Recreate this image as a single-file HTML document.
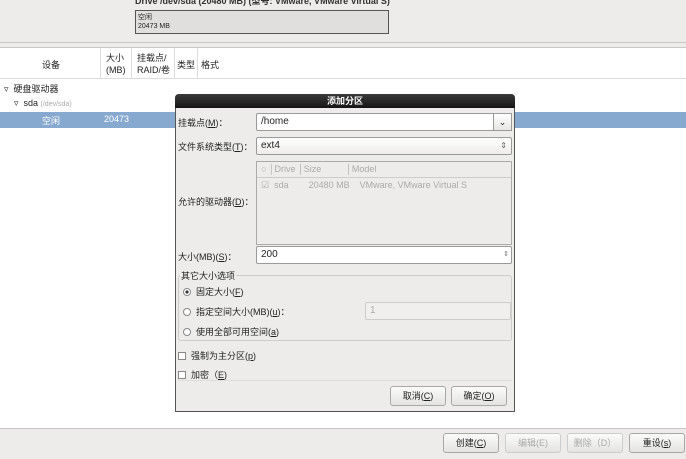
<!DOCTYPE html>
<html><head><meta charset="utf-8"><style>
*{box-sizing:border-box;margin:0;padding:0}
body{width:686px;height:459px;background:#edeceb;font-family:"Liberation Sans","Noto Sans CJK SC",sans-serif;font-size:9px;color:#222;position:relative;overflow:hidden}
.a{position:absolute}
.btn{position:absolute;height:20px;border:1px solid #a8a8a5;border-radius:3px;background:linear-gradient(#fbfbfa,#e4e3e1);text-align:center;line-height:18px;font-size:9px}
.dis{color:#aaa;border-color:#ccc}
.inp{position:absolute;background:#fff;border:1px solid #9a9a98;border-radius:2px;height:18px;line-height:16px;padding-left:4px;font-size:10px}
.lab{position:absolute;left:3px;font-size:9px}
.radio{display:inline-block;width:8px;height:8px;border:1px solid #888;border-radius:50%;background:#fff;vertical-align:-1px;margin-right:5px}
.cb{display:inline-block;width:8px;height:8px;border:1px solid #888;background:#fff;vertical-align:-1px;margin-right:5px}
</style></head><body>
<div class="a" style="left:0;top:0;width:686px;height:43px;border-bottom:1px solid #c8c7c5"></div>
<div class="a" style="left:135px;top:-6px;font-size:9px;font-weight:bold;color:#333">Drive /dev/sda (20480 MB) (型号: VMware, VMware Virtual S)</div>
<div class="a" style="left:135px;top:10px;width:254px;height:24px;background:#e0dfdd;border:1px solid #555;font-size:7px;line-height:9px;padding:2px 2px">空闲<br>20473 MB</div>
<div class="a" style="left:0;top:47px;width:686px;height:382px;background:#fff;border-top:1px solid #c8c7c5;border-bottom:1px solid #c8c7c5"></div>
<div class="a" style="left:0;top:48px;width:686px;height:31px;border-bottom:1px solid #ddd"></div>
<div class="a" style="left:42px;top:58px">设备</div>
<div class="a" style="left:100px;top:48px;width:1px;height:31px;background:#ddd"></div>
<div class="a" style="left:106px;top:52px;line-height:12px">大小<br>(MB)</div>
<div class="a" style="left:131px;top:48px;width:1px;height:31px;background:#ddd"></div>
<div class="a" style="left:137px;top:52px;line-height:12px">挂载点/<br>RAID/卷</div>
<div class="a" style="left:174px;top:48px;width:1px;height:31px;background:#ddd"></div>
<div class="a" style="left:177px;top:58px">类型</div>
<div class="a" style="left:197px;top:48px;width:1px;height:31px;background:#ddd"></div>
<div class="a" style="left:201px;top:58px">格式</div>
<div class="a" style="left:4px;top:82px">▿ &nbsp;硬盘驱动器</div>
<div class="a" style="left:14px;top:98px">▿ &nbsp;sda <span style="color:#aaa;font-size:7px">(/dev/sda)</span></div>
<div class="a" style="left:0;top:112px;width:686px;height:16px;background:#88a9cf"></div>
<div class="a" style="left:42px;top:114px;color:#fff">空闲</div>
<div class="a" style="left:104px;top:114px;color:#fff">20473</div>

<div class="a" style="left:175px;top:94px;width:340px;height:318px;background:#edeceb;border:1px solid #555;border-radius:4px 4px 0 0"></div>
<div class="a" style="left:175px;top:94px;width:340px;height:14px;background:linear-gradient(#3a3a3a,#151515);border-radius:4px 4px 0 0;color:#fff;text-align:center;line-height:14px;font-weight:bold;font-size:9px">添加分区</div>
<div class="a" style="left:175px;top:108px;width:340px;height:304px">
<div class="lab" style="top:8px">挂载点(<u>M</u>)：</div>
<div class="inp" style="left:81px;top:5px;width:256px">/home</div>
<div class="a" style="left:318px;top:5px;width:19px;height:18px;border:1px solid #9a9a98;background:linear-gradient(#fff,#e6e6e4);text-align:center;line-height:16px;font-size:9px">⌄</div>
<div class="lab" style="top:32px">文件系统类型(<u>T</u>)：</div>
<div class="inp" style="left:81px;top:29px;width:256px;background:linear-gradient(#fff,#eeedec)">ext4<span style="position:absolute;right:4px;color:#666;font-size:8px">⇕</span></div>
<div class="lab" style="top:87px">允许的驱动器(<u>D</u>)：</div>
<div class="a" style="left:81px;top:53px;width:256px;height:84px;border:1px solid #aaa;background:#edeceb;color:#aaa;font-size:9px">
<div style="height:16px;border-bottom:1px solid #ccc;line-height:15px;padding-left:4px">○ │Drive │Size &nbsp;&nbsp;&nbsp;&nbsp;&nbsp;&nbsp;&nbsp;&nbsp;&nbsp;│Model</div>
<div style="line-height:14px;padding-left:4px">☑ &nbsp;sda &nbsp;&nbsp;&nbsp;&nbsp;&nbsp;&nbsp;&nbsp;20480 MB &nbsp;&nbsp;&nbsp;VMware, VMware Virtual S</div>
</div>
<div class="lab" style="top:142px">大小(MB)(<u>S</u>)：</div>
<div class="inp" style="left:81px;top:138px;width:256px">200<span style="position:absolute;right:2px;color:#777;font-size:7px">⇕</span></div>
<div class="a" style="left:3px;top:167px;width:334px;height:66px;border:1px solid #ccc;border-radius:3px"></div>
<div class="a" style="left:5px;top:161px;background:#edeceb;padding:0 1px">其它大小选项</div>
<div class="a" style="left:8px;top:177px"><span class="radio" style="background:radial-gradient(#333 35%,#fff 40%)"></span>固定大小(<u>F</u>)</div>
<div class="a" style="left:8px;top:197px"><span class="radio"></span>指定空间大小(MB)(<u>u</u>)：</div>
<div class="inp" style="left:190px;top:194px;width:146px;color:#aaa;background:#f0efee;border-color:#ccc">1</div>
<div class="a" style="left:8px;top:217px"><span class="radio"></span>使用全部可用空间(<u>a</u>)</div>
<div class="a" style="left:3px;top:241px"><span class="cb"></span>强制为主分区(<u>p</u>)</div>
<div class="a" style="left:3px;top:260px"><span class="cb"></span>加密（<u>E</u>)</div>
<div class="a" style="left:3px;top:272px;width:334px;height:1px;background:#ddd"></div>
<div class="btn" style="left:215px;top:278px;width:56px">取消(<u>C</u>)</div>
<div class="btn" style="left:276px;top:278px;width:56px">确定(<u>O</u>)</div>
</div>
<div class="btn" style="left:443px;top:433px;width:56px">创建(<u>C</u>)</div>
<div class="btn dis" style="left:505px;top:433px;width:56px">编辑(E)</div>
<div class="btn dis" style="left:567px;top:433px;width:56px">删除（D）</div>
<div class="btn" style="left:629px;top:433px;width:56px">重设(<u>s</u>)</div>
</body></html>
